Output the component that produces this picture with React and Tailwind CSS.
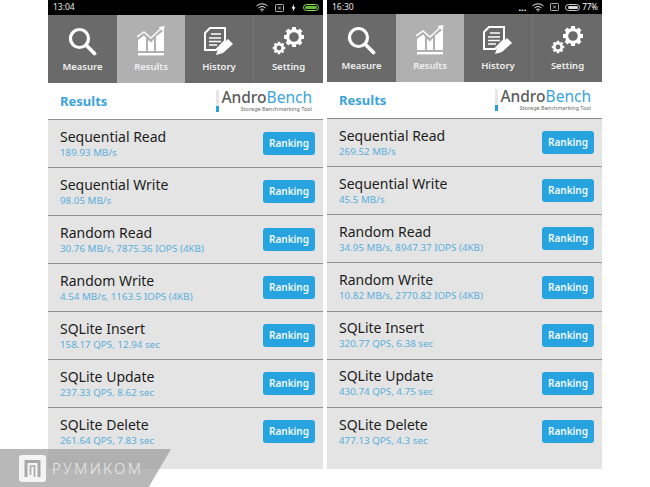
const LEFT = {
  time: '13:04',
  results: ['189.93 MB/s', '98.05 MB/s', '30.76 MB/s, 7875.36 IOPS (4KB)', '4.54 MB/s, 1163.5 IOPS (4KB)', '158.17 QPS, 12.94 sec', '237.33 QPS, 8.62 sec', '261.64 QPS, 7.83 sec'],
};
const RIGHT = {
  time: '16:30',
  results: ['269.52 MB/s', '45.5 MB/s', '34.95 MB/s, 8947.37 IOPS (4KB)', '10.82 MB/s, 2770.82 IOPS (4KB)', '320.77 QPS, 6.38 sec', '430.74 QPS, 4.75 sec', '477.13 QPS, 4.3 sec'],
};
const NAMES = ['Sequential Read', 'Sequential Write', 'Random Read', 'Random Write', 'SQLite Insert', 'SQLite Update', 'SQLite Delete'];

function MeasureIcon() {
  return (
    <svg width="29" height="29" viewBox="0 0 29 29" fill="none" stroke="#fff">
      <circle cx="11.5" cy="11.5" r="9" strokeWidth="3.2" />
      <path d="M18.5 18.5 L26.5 26.5" strokeWidth="3.8" strokeLinecap="round" />
    </svg>
  );
}

function ResultsIcon() {
  return (
    <svg width="28" height="30" viewBox="0 0 28 30" fill="#fff">
      <path d="M1 25 V14 L7 9.5 L9 11.5 V25 Z M11 25 V14 L14 16.5 L17 13 V25 Z M19 25 V10.5 L27 4.5 V25 Z" />
      <path d="M0 11 L7 6 L14 12 L24 2.5" fill="none" stroke="#fff" strokeWidth="1.5" />
      <path d="M21.5 1 L27.5 0 L26.5 6 Z" />
      <rect x="1" y="27" width="26" height="2.4" />
    </svg>
  );
}

function HistoryIcon() {
  return (
    <svg width="30" height="29" viewBox="0 0 30 29" fill="none" stroke="#fff">
      <path d="M6 1 H21 V14 L12 23 H1 V6 Z" strokeWidth="2" />
      <path d="M5 11 H17 M5 14.5 H17 M5 18 H13 M7 7 H17" strokeWidth="1.7" />
      <path d="M14 22 L24 12 L29 17 L19 26 L12 28 Z" fill="#fff" stroke="none" />
    </svg>
  );
}

function Gear({ cx, cy, r, hole, teeth }) {
  const marks = [];
  for (let i = 0; i < teeth; i++) {
    const a = (i * 2 * Math.PI) / teeth;
    marks.push(
      <line
        key={i}
        x1={cx + Math.cos(a) * r * 0.8}
        y1={cy + Math.sin(a) * r * 0.8}
        x2={cx + Math.cos(a) * r * 1.25}
        y2={cy + Math.sin(a) * r * 1.25}
        stroke="#fff"
        strokeWidth={r * 0.5}
      />,
    );
  }
  return (
    <g>
      {marks}
      <circle cx={cx} cy={cy} r={r - hole / 2} fill="none" stroke="#fff" strokeWidth={hole} />
    </g>
  );
}

function SettingIcon() {
  return (
    <svg width="33" height="29" viewBox="0 0 33 29">
      <Gear cx={22} cy={10} r={8} hole={3.2} teeth={8} />
      <Gear cx={7} cy={21} r={5} hole={2.6} teeth={8} />
    </svg>
  );
}

function Tab({ label, icon, active, width }) {
  return (
    <div className={`flex flex-col items-center ${width} ${active ? 'bg-[#b0b0b0]' : 'bg-[#6a6a6a]'}`}>
      <div className="flex h-[44px] w-full items-end justify-center pb-[3px]">{icon}</div>
      <div className="mt-[1px] text-[9.5px] font-semibold leading-[14px] text-[#f0f0f0]">{label}</div>
    </div>
  );
}

function StatusLeft() {
  return (
    <div className="flex items-center gap-[7px]">
      <WifiGlyph />
      <SimGlyph />
      <svg width="5" height="8" viewBox="0 0 5 8" fill="#fff"><path d="M3 0 L0.5 4.5 H2.2 L1.6 8 L4.5 3.2 H2.8 Z" /></svg>
      <div className="flex h-[7px] w-[16px] items-center rounded-[4px] border border-[#8be04e] p-[1px]">
        <div className="h-full w-[15px] rounded-[3px] bg-[#5fc13a]" />
      </div>
    </div>
  );
}

function StatusRight() {
  return (
    <div className="flex items-center gap-[6px]">
      <span className="text-[9px] font-bold leading-[9px] text-white">...</span>
      <WifiGlyph />
      <SimGlyph />
      <div className="flex items-center gap-[2px]">
        <div className="flex h-[7px] w-[15px] items-center rounded-[4px] border border-[#cccccc] p-[1px]">
          <div className="ml-auto h-full w-[10px] rounded-[2px] bg-[#dddddd]" />
        </div>
        <span className="text-[8px] text-white">77%</span>
      </div>
    </div>
  );
}

function WifiGlyph() {
  return (
    <svg width="12" height="9" viewBox="0 0 12 9" fill="none" stroke="#e8e8e8" strokeWidth="1">
      <path d="M0.5 3 A8 8 0 0 1 11.5 3 M2.4 5 A5.2 5.2 0 0 1 9.6 5 M4.2 6.8 A2.6 2.6 0 0 1 7.8 6.8" />
      <circle cx="6" cy="8" r="0.7" fill="#e8e8e8" stroke="none" />
    </svg>
  );
}

function SimGlyph() {
  return (
    <svg width="9" height="8" viewBox="0 0 9 8" fill="none" stroke="#d8d8d8" strokeWidth="0.8">
      <rect x="0.5" y="0.5" width="8" height="7" rx="0.8" />
      <path d="M3 2.5 L6 5.5 M6 2.5 L3 5.5" />
    </svg>
  );
}

function Row({ name, result, height }) {
  return (
    <div className={`flex items-center justify-between border-t border-[#8f8f8f] bg-[#e4e4e4] pl-[12px] pr-[8px] ${height}`}>
      <div>
        <div className="text-[14px] leading-[16px] text-[#1c1c1c]">{name}</div>
        <div className="mt-[2px] text-[9.8px] leading-[12px] text-[#58aedb]">{result}</div>
      </div>
      <div className="flex h-[23px] w-[52px] items-center justify-center rounded-[3px] bg-[#27a4e0] text-[10px] font-semibold text-[#f4f9fc]">
        Ranking
      </div>
    </div>
  );
}

function Phone({ data, status, statusHeight, rowHeight }) {
  return (
    <div className="w-[275px]">
      <div className={`flex items-center justify-between bg-black pl-[5px] pr-[4px] ${statusHeight}`}>
        <span className="text-[8.5px] text-[#e8e8e8]">{data.time}</span>
        {status}
      </div>
      <div className="flex h-[68px]">
        <Tab label="Measure" width="w-[69px]" icon={<MeasureIcon />} />
        <Tab label="Results" width="w-[68px]" active icon={<ResultsIcon />} />
        <Tab label="History" width="w-[68px]" icon={<HistoryIcon />} />
        <Tab label="Setting" width="w-[70px] border-l border-[#757575]" icon={<SettingIcon />} />
      </div>
      <div className="flex h-[36px] items-center justify-between pl-[12px] pr-[11px]">
        <span className="pt-[2px] text-[13px] font-bold text-[#3aa3dc]">Results</span>
        <div className="flex items-stretch gap-[3px]">
          <div className="flex h-[22px] w-[3px] flex-col justify-end bg-[#e6e6e6]">
            <div className="h-[6px] bg-[#2a9fdc]" />
          </div>
          <div className="flex w-[90px] flex-col items-end">
            <div className="whitespace-nowrap text-[15.5px] leading-[15px] text-[#5c5c5c]">
              <span className="font-medium">Andro</span>
              <span className="text-[#3aa3dc]">Bench</span>
            </div>
            <div className="mt-[1px] whitespace-nowrap text-[5.5px] leading-[6px] text-[#666666]">Storage Benchmarking Tool</div>
          </div>
        </div>
      </div>
      <div>
        {NAMES.map((name, i) => (
          <Row key={name} name={name} result={data.results[i]} height={rowHeight} />
        ))}
      </div>
      <div className="h-[14px] bg-[#e4e4e4]" />
    </div>
  );
}

export default function App() {
  return (
    <div className="relative h-[487px] w-[650px] overflow-hidden bg-white font-['Noto_Sans','Open_Sans',sans-serif]">
      <div className="flex gap-[4px] pl-[48px]">
        <Phone data={LEFT} status={<StatusLeft />} statusHeight="h-[15px]" rowHeight="h-[48px]" />
        <Phone data={RIGHT} status={<StatusRight />} statusHeight="h-[14px]" rowHeight="h-[48.17px]" />
      </div>
      {/* watermark */}
      <div className="absolute bottom-0 left-0 flex h-[38px] w-[171px] items-center bg-[#9a9a9a]/70 pl-[19px] [clip-path:polygon(0_0,100%_0,87%_100%,0_100%)]">
        <svg width="27" height="27" viewBox="0 0 27 27" fill="none">
          <rect width="27" height="27" rx="3" fill="#f4f4f4" />
          <path d="M7 22 V6.5 H20 V22" stroke="#a8a8a8" strokeWidth="3" />
          <path d="M11.5 20 V11 H15.5 V22" stroke="#a8a8a8" strokeWidth="1.6" />
        </svg>
        <span className="ml-[6px] text-[15px] font-light tracking-[2.4px] text-[#e8e8e8]">РУМИКОМ</span>
      </div>
    </div>
  );
}
